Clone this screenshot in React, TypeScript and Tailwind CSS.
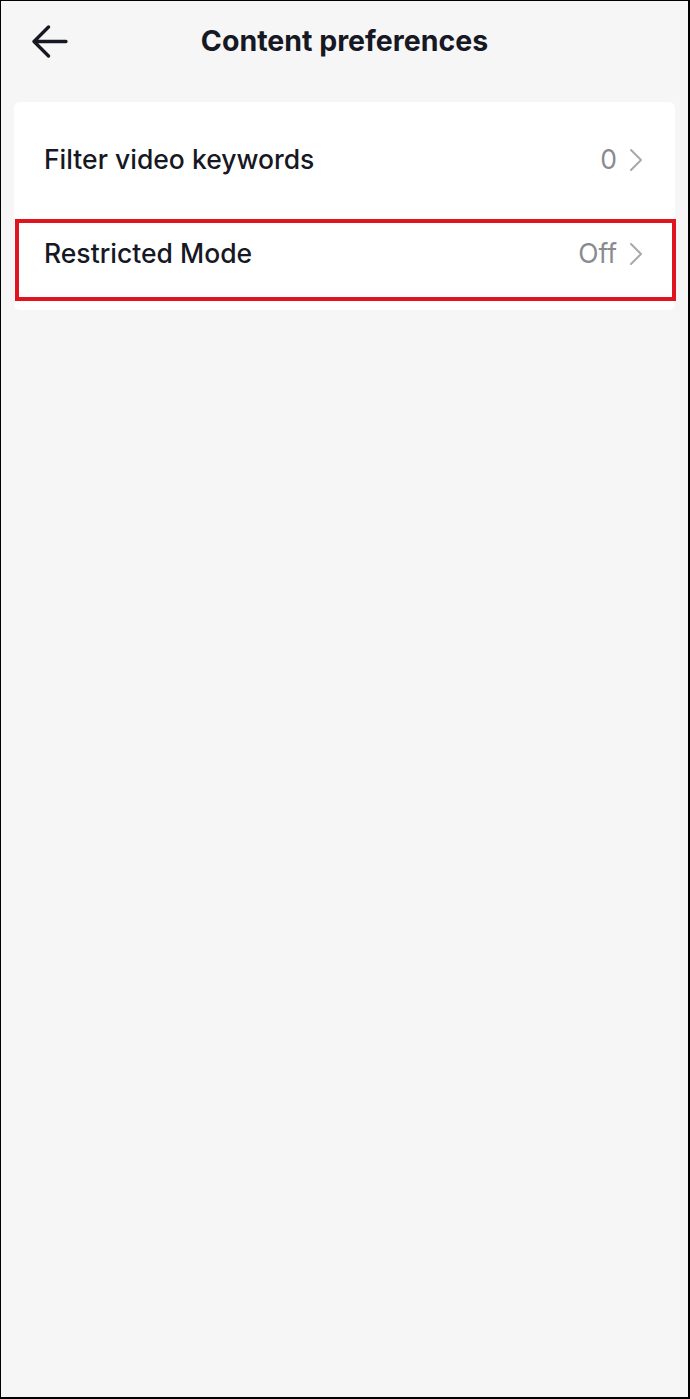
import React from "react";

function Chevron() {
  return (
    <svg width="16" height="24" viewBox="0 0 16 24" fill="none" className="shrink-0">
      <path d="M3 2 L13 12 L3 22" stroke="#a8a9ad" strokeWidth="2" strokeLinecap="round" strokeLinejoin="round" />
    </svg>
  );
}

function Row({ label, value }: { label: string; value: string }) {
  return (
    <div className="flex h-[94px] items-center justify-between pl-[30px] pr-[31px]">
      <span className="text-[26.5px] font-medium text-[#161823]">{label}</span>
      <div className="flex items-center gap-[11px]">
        <span className="text-[26.5px] text-[#8a8b91]">{value}</span>
        <Chevron />
      </div>
    </div>
  );
}

export default function App() {
  return (
    <div
      className="relative h-[1399px] w-[690px] overflow-hidden border-t border-l border-r-2 border-b-2 border-black bg-[#f6f6f6]"
      style={{ fontFamily: "Inter, 'Noto Sans', sans-serif" }}
    >
      <div className="relative flex h-[80px] items-center justify-center">
        <div className="absolute left-[31px] top-[24px]">
          <svg width="36" height="33" viewBox="0 0 36 33" fill="none">
            <path d="M34 16.5 H3 M16.5 2 L2 16.5 L16.5 31" stroke="#161823" strokeWidth="3.3" strokeLinecap="round" strokeLinejoin="round" />
          </svg>
        </div>
        <h1 className="text-[28.5px] font-bold text-[#161823]">Content preferences</h1>
      </div>
      <div className="mx-[13px] mt-[21px] rounded-[6px] bg-white pt-[11px] pb-[9px]">
        <Row label="Filter video keywords" value="0" />
        <Row label="Restricted Mode" value="Off" />
      </div>
      <div className="pointer-events-none absolute left-[14px] top-[218px] h-[82px] w-[661px] border-4 border-[#e0141e]" />
    </div>
  );
}
